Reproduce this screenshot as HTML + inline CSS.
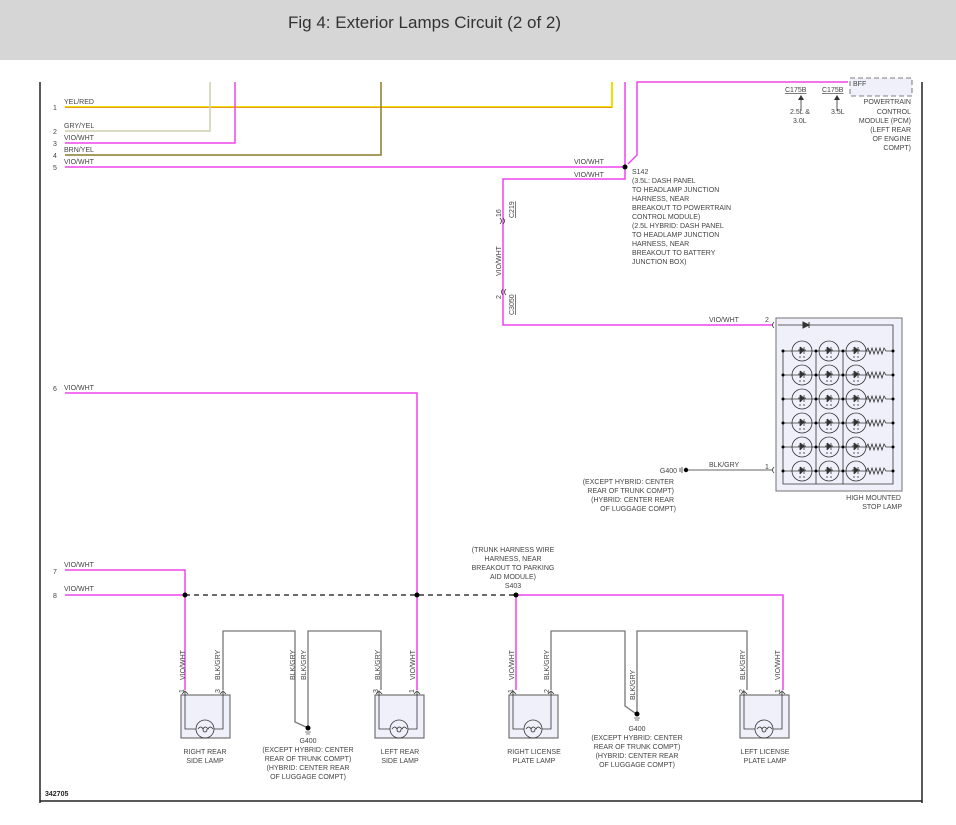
<!DOCTYPE html>
<html><head><meta charset="utf-8"><style>
html,body{margin:0;padding:0;background:#fff;width:956px;height:825px;overflow:hidden}
.hd{position:absolute;left:0;top:0;width:956px;height:60px;background:#d6d6d6}
.hd span{position:absolute;left:288px;top:13px;font:17px "Liberation Sans",sans-serif;color:#333}
svg{position:absolute;left:0;top:0}
text{font-family:"Liberation Sans",sans-serif;font-size:7px;fill:#444}
</style></head><body>
<div class="hd"><span>Fig 4: Exterior Lamps Circuit (2 of 2)</span></div>
<svg width="956" height="825" viewBox="0 0 956 825">
<defs>
<g id="led"><circle r="10" fill="none" stroke="#333" stroke-width="0.8"/><path d="M-4 -1H4M-2 -4V3M2 -4V3M-2 -4L2 -1L-2 3M-2 5V7M2 5V7" stroke="#333" stroke-width="0.8" fill="#333"/></g>
</defs>
<!-- frame -->
<path d="M40 82V803M922 82V803M40 801H922" stroke="#222" stroke-width="1.5" fill="none"/>
<!-- top wires -->
<path d="M65 107H612V82" stroke="#f0e000" stroke-width="2" fill="none"/>
<path d="M65 107.5H612" stroke="#e05050" stroke-width="0.6"/>
<path d="M65 131H210V82" stroke="#cfcfb0" stroke-width="1.5" fill="none"/>
<path d="M65 143H235V82" stroke="#ee44ee" stroke-width="1.5" fill="none"/>
<path d="M65 155H381V82" stroke="#8b7a2a" stroke-width="1.5" fill="none"/>
<path d="M65 167H625V82" stroke="#ee44ee" stroke-width="1.5" fill="none"/>
<path d="M628 164L637 155V82H848" stroke="#ee44ee" stroke-width="1.5" fill="none"/>
<path d="M625 167V179H503V325H772" stroke="#ee44ee" stroke-width="1.5" fill="none"/>
<circle cx="625" cy="167" r="2.5" fill="#000"/>
<text x="64" y="104">YEL/RED</text><text x="53" y="110">1</text>
<text x="64" y="128">GRY/YEL</text><text x="53" y="134">2</text>
<text x="64" y="140">VIO/WHT</text><text x="53" y="146">3</text>
<text x="64" y="152">BRN/YEL</text><text x="53" y="158">4</text>
<text x="64" y="164">VIO/WHT</text><text x="53" y="170">5</text>
<text x="574" y="164">VIO/WHT</text><text x="574" y="177">VIO/WHT</text>
<text x="632" y="174">S142</text>
<text x="632" y="183">(3.5L: DASH PANEL</text>
<text x="632" y="192">TO HEADLAMP JUNCTION</text>
<text x="632" y="201">HARNESS, NEAR</text>
<text x="632" y="210">BREAKOUT TO POWERTRAIN</text>
<text x="632" y="219">CONTROL MODULE)</text>
<text x="632" y="228">(2.5L HYBRID: DASH PANEL</text>
<text x="632" y="237">TO HEADLAMP JUNCTION</text>
<text x="632" y="246">HARNESS, NEAR</text>
<text x="632" y="255">BREAKOUT TO BATTERY</text>
<text x="632" y="264">JUNCTION BOX)</text>
<!-- connectors on vertical -->
<path d="M500 218q3 3 0 6M503 218q3 3 0 6M506 289q-3 3 0 6M503 289q-3 3 0 6" stroke="#333" fill="none" stroke-width="0.8"/>
<text transform="translate(501,217) rotate(-90)">16</text>
<text transform="translate(514,218) rotate(-90)" text-decoration="underline">C219</text>
<text transform="translate(501,276) rotate(-90)">VIO/WHT</text>
<text transform="translate(501,299) rotate(-90)">2</text>
<text transform="translate(514,315) rotate(-90)" text-decoration="underline">C3050</text>
<!-- PCM -->
<rect x="850" y="78" width="62" height="18" fill="#f0f0fa" stroke="#555" stroke-dasharray="5 3" stroke-width="0.8"/>
<text x="853" y="86">BFF</text>
<text x="785" y="92" text-decoration="underline">C175B</text>
<text x="822" y="92" text-decoration="underline">C175B</text>
<path d="M801 111V97M837 111V97" stroke="#333" stroke-width="0.8"/>
<path d="M798 100L801 95L804 100ZM834 100L837 95L840 100Z" fill="#333"/>
<text x="790" y="114">2.5L &amp;</text><text x="793" y="123">3.0L</text>
<text x="831" y="114">3.5L</text>
<text x="911" y="104" text-anchor="end">POWERTRAIN</text>
<text x="911" y="114" text-anchor="end">CONTROL</text>
<text x="911" y="123" text-anchor="end">MODULE (PCM)</text>
<text x="911" y="132" text-anchor="end">(LEFT REAR</text>
<text x="911" y="141" text-anchor="end">OF ENGINE</text>
<text x="911" y="150" text-anchor="end">COMPT)</text>
<!-- HMSL -->
<text x="709" y="322">VIO/WHT</text><text x="765" y="322">2</text>
<rect x="776" y="318" width="126" height="173" fill="#f0f0fa" stroke="#888" stroke-width="1.2"/>
<path d="M774 322q-3 3 0 6M778 325H893V484H783V351" stroke="#333" fill="none" stroke-width="0.8"/>
<path d="M803 322V328L809 325ZM809 322V328" stroke="#333" fill="#333"/>
<path d="M816 351V484M843 351V484" stroke="#333" stroke-width="0.8"/>
<g id="rows">
<g><path d="M783 351H870" stroke="#333" stroke-width="0.8"/><use href="#led" x="802" y="351"/><use href="#led" x="829" y="351"/><use href="#led" x="856" y="351"/><path d="M866 351l2-3l2 6l2-6l2 6l2-6l2 6l2-6l2 6l2-6l2 3H893" stroke="#333" fill="none" stroke-width="0.8"/><circle cx="783" cy="351" r="1.5"/><circle cx="816" cy="351" r="1.5"/><circle cx="843" cy="351" r="1.5"/><circle cx="893" cy="351" r="1.5"/></g>
</g>
<use href="#rows" y="24"/><use href="#rows" y="48"/><use href="#rows" y="72"/><use href="#rows" y="96"/><use href="#rows" y="120"/>
<path d="M686 470H772M774 467q-3 3 0 6" stroke="#333" stroke-width="0.8" fill="none"/>
<circle cx="686" cy="470" r="2.2"/><path d="M682 467V473M680 468V472" stroke="#333" stroke-width="0.8"/>
<text x="709" y="467">BLK/GRY</text><text x="765" y="469">1</text>
<text x="677" y="473" text-anchor="end">G400</text>
<text x="674" y="484" text-anchor="end">(EXCEPT HYBRID: CENTER</text>
<text x="674" y="493" text-anchor="end">REAR OF TRUNK COMPT)</text>
<text x="674" y="502" text-anchor="end">(HYBRID: CENTER REAR</text>
<text x="676" y="511" text-anchor="end">OF LUGGAGE COMPT)</text>
<text x="901" y="500" text-anchor="end">HIGH MOUNTED</text>
<text x="902" y="509" text-anchor="end">STOP LAMP</text>
<!-- lower wires -->
<path d="M65 393H417V690" stroke="#ee44ee" stroke-width="1.5" fill="none"/>
<path d="M65 570H185V690M65 595H185" stroke="#ee44ee" stroke-width="1.5" fill="none"/>
<path d="M516 690V595H783V690" stroke="#ee44ee" stroke-width="1.5" fill="none"/>
<path d="M185 595H516" stroke="#111" stroke-width="1.2" stroke-dasharray="5 4"/>
<circle cx="185" cy="595" r="2.5"/><circle cx="417" cy="595" r="2.5"/><circle cx="516" cy="595" r="2.5"/>
<text x="64" y="390">VIO/WHT</text><text x="53" y="391">6</text>
<text x="64" y="567">VIO/WHT</text><text x="53" y="574">7</text>
<text x="64" y="591">VIO/WHT</text><text x="53" y="598">8</text>
<text x="513" y="552" text-anchor="middle">(TRUNK HARNESS WIRE</text>
<text x="513" y="561" text-anchor="middle">HARNESS, NEAR</text>
<text x="513" y="570" text-anchor="middle">BREAKOUT TO PARKING</text>
<text x="513" y="579" text-anchor="middle">AID MODULE)</text>
<text x="513" y="588" text-anchor="middle">S403</text>
<path d="M223 690V631H295V722L306 727M308 727V631H381V690" stroke="#777" stroke-width="1.3" fill="none"/>
<path d="M551 690V631H625V706L635 713M637 713V631H747V690" stroke="#777" stroke-width="1.3" fill="none"/>
<circle cx="308" cy="728" r="2.5"/><path d="M305 732H311M306 734H310" stroke="#555" stroke-width="0.7"/>
<circle cx="637" cy="714" r="2.5"/><path d="M634 718H640M635 720H639" stroke="#555" stroke-width="0.7"/>
<!-- lamps -->
<g id="lamp" fill="none" stroke="#333" stroke-width="0.8">
<rect x="181" y="695" width="49" height="43" fill="#f0f0fa" stroke="#666" stroke-width="1.1"/>
<path d="M185 692V729H196M214 729H223V692M182 694l3-3l3 3M220 694l3-3l3 3"/>
<circle cx="205" cy="729" r="9"/><path d="M198 729q3-4 5 0q2-4 5 0q2-4 5 0M203 729q0 3 2 3q2 0 2-3"/>
</g>
<use href="#lamp" x="194"/><use href="#lamp" x="328"/><use href="#lamp" x="559"/>
<text transform="translate(185,680) rotate(-90)">VIO/WHT</text>
<text transform="translate(220,680) rotate(-90)">BLK/GRY</text>
<text transform="translate(295,680) rotate(-90)">BLK/GRY</text>
<text transform="translate(306,680) rotate(-90)">BLK/GRY</text>
<text transform="translate(380,680) rotate(-90)">BLK/GRY</text>
<text transform="translate(415,680) rotate(-90)">VIO/WHT</text>
<text transform="translate(514,680) rotate(-90)">VIO/WHT</text>
<text transform="translate(549,680) rotate(-90)">BLK/GRY</text>
<text transform="translate(635,700) rotate(-90)">BLK/GRY</text>
<text transform="translate(745,680) rotate(-90)">BLK/GRY</text>
<text transform="translate(780,680) rotate(-90)">VIO/WHT</text>
<text transform="translate(184,693) rotate(-90)">1</text><text transform="translate(220,693) rotate(-90)">3</text>
<text transform="translate(378,693) rotate(-90)">3</text><text transform="translate(414,693) rotate(-90)">1</text>
<text transform="translate(513,693) rotate(-90)">1</text><text transform="translate(549,693) rotate(-90)">2</text>
<text transform="translate(744,693) rotate(-90)">2</text><text transform="translate(780,693) rotate(-90)">1</text>
<text x="205" y="754" text-anchor="middle">RIGHT REAR</text><text x="205" y="763" text-anchor="middle">SIDE LAMP</text>
<text x="400" y="754" text-anchor="middle">LEFT REAR</text><text x="400" y="763" text-anchor="middle">SIDE LAMP</text>
<text x="534" y="754" text-anchor="middle">RIGHT LICENSE</text><text x="534" y="763" text-anchor="middle">PLATE LAMP</text>
<text x="765" y="754" text-anchor="middle">LEFT LICENSE</text><text x="765" y="763" text-anchor="middle">PLATE LAMP</text>
<text x="308" y="743" text-anchor="middle">G400</text>
<text x="308" y="752" text-anchor="middle">(EXCEPT HYBRID: CENTER</text>
<text x="308" y="761" text-anchor="middle">REAR OF TRUNK COMPT)</text>
<text x="308" y="770" text-anchor="middle">(HYBRID: CENTER REAR</text>
<text x="308" y="779" text-anchor="middle">OF LUGGAGE COMPT)</text>
<text x="637" y="731" text-anchor="middle">G400</text>
<text x="637" y="740" text-anchor="middle">(EXCEPT HYBRID: CENTER</text>
<text x="637" y="749" text-anchor="middle">REAR OF TRUNK COMPT)</text>
<text x="637" y="758" text-anchor="middle">(HYBRID: CENTER REAR</text>
<text x="637" y="767" text-anchor="middle">OF LUGGAGE COMPT)</text>
<text x="45" y="796" style="font-weight:bold;fill:#222">342705</text>
</svg>
</body></html>
